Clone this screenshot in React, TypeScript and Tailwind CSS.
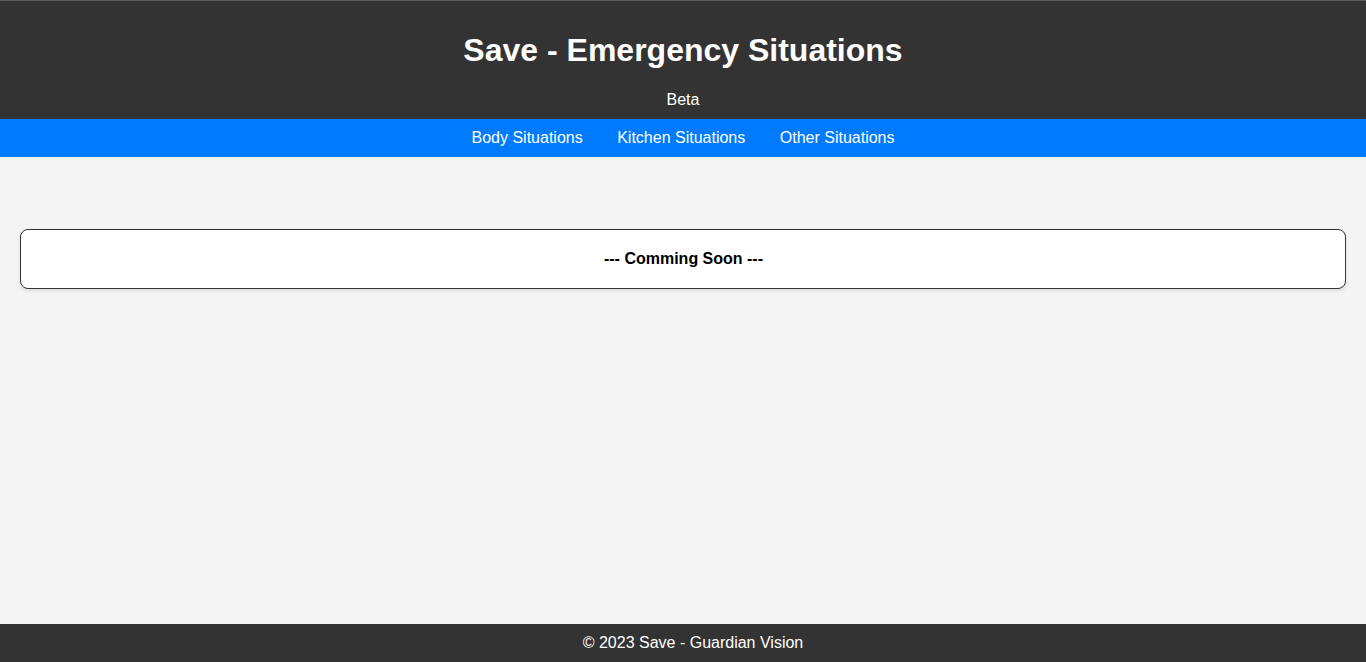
const links = ["Body Situations", "Kitchen Situations", "Other Situations"];

export default function App() {
  return (
    <div className="flex h-[662px] flex-col overflow-hidden bg-[#f4f4f4] font-['Liberation_Sans',Arial,sans-serif] text-base leading-[18px] text-black">
      <header className="h-[119px] shrink-0 border-t border-[#5c5e5d] bg-[#333] pt-[31px] text-center text-white">
        <h1 className="text-[32px] leading-[37px] font-bold">Save - Emergency Situations</h1>
        <p className="mt-[22px]">Beta</p>
      </header>
      <nav className="flex h-[38px] shrink-0 items-center justify-center gap-[34.5px] bg-[#007bff] text-white">
        {links.map((label) => (
          <a key={label} href="#">{label}</a>
        ))}
      </nav>
      <main className="flex-1 px-5 pt-[72px]">
        <section className="flex h-[60px] items-center justify-center rounded-lg border border-[#333] bg-white shadow-[0_2px_4px_rgba(0,0,0,0.1)]">
          <p className="pl-px font-bold">--- Comming Soon ---</p>
        </section>
      </main>
      <footer className="h-[38px] shrink-0 bg-[#333] pt-[10px] pl-5 text-center text-white">
        <p>© 2023 Save - Guardian Vision</p>
      </footer>
    </div>
  );
}
